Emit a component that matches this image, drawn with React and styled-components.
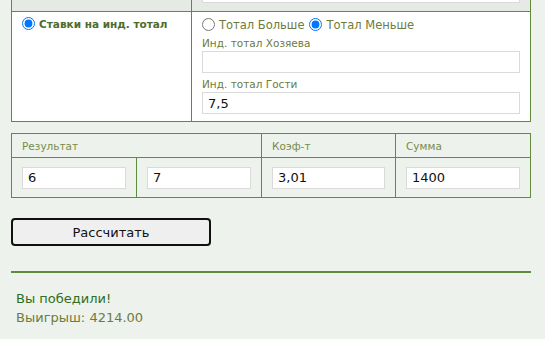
import React from 'react';
import styled, { createGlobalStyle } from 'styled-components';

const GlobalStyle = createGlobalStyle`
  html, body {
    margin: 0;
    padding: 0;
    background: #edf2ec;
    font-family: "DejaVu Sans", Verdana, sans-serif;
    overflow: hidden;
  }
`

const Page = styled.div`
  padding: 0 14px 0 11px;
  width: 520px;
`

const Table = styled.table`
  width: 520px;
  border-collapse: collapse;
  table-layout: fixed;
  margin-top: ${({ top }) => top}px;
  td, th {
    border: 1px solid #5f8b3f;
  }
`

const GreyRow = styled.tr`
  background: #e5eae4;
  td {
    height: 32px;
    padding: 0 10px 8px 10px;
    vertical-align: bottom;
  }
`

const WhiteRow = styled.tr`
  background: #ffffff;
  td {
    vertical-align: top;
    padding: 5px 10px 7px 10px;
  }
`

const Radio = styled.input.attrs({ type: 'radio' })`
  width: 13px;
  height: 13px;
  margin: 0 4px 0 0;
  vertical-align: -2px;
`

const BetLabel = styled.label`
  font-size: 10.5px;
  line-height: 14px;
  font-weight: bold;
  color: #4e6d2d;
  display: block;
`

const OptionLine = styled.div`
  line-height: 14px;
  height: 14px;
  white-space: nowrap;
`

const OptionLabel = styled.label`
  font-size: 11.5px;
  color: #6d7b3c;
  margin-right: 5px;
`

const FieldLabel = styled.div`
  font-size: 10.5px;
  line-height: 13px;
  color: #6d7b3c;
  margin-top: ${({ gap }) => gap}px;
  margin-bottom: 1px;
`

const TextInput = styled.input`
  box-sizing: border-box;
  display: block;
  width: 100%;
  height: 22px;
  border: 1px solid #dadada;
  background: #fff;
  font-family: "DejaVu Sans", Verdana, sans-serif;
  font-size: 13px;
  color: #111;
  padding: 0 5px;
  outline: none;
`

const HeadCell = styled.th`
  height: 23px;
  padding: 0 10px;
  text-align: left;
  font-weight: normal;
  font-size: 10.5px;
  color: #7a8a4a;
`

const BodyCell = styled.td`
  height: 39px;
  padding: 0 10px;
  vertical-align: middle;
`

const CalcButton = styled.button`
  display: block;
  margin-top: 20px;
  width: 200px;
  height: 28px;
  border: 2px solid #111;
  border-radius: 4px;
  background: #efefef;
  font-family: "DejaVu Sans", Verdana, sans-serif;
  font-size: 13px;
  color: #111;
  cursor: pointer;
`

const Divider = styled.hr`
  margin: 25px 0 0 0;
  border: none;
  height: 2px;
  width: 520px;
  background: #5f8b3f;
`

const Result = styled.div`
  padding: 16px 0 0 5px;
  font-size: 13px;
  line-height: 19px;
`

const Win = styled.div`
  color: #2e6e1c;
`

const Payout = styled.div`
  color: #6d7b3c;
`

const App = () => {
    return (
        <>
            <GlobalStyle />
            <Page>
                <Table top={-30}>
                    <colgroup>
                        <col style={{ width: 180 }} />
                        <col />
                    </colgroup>
                    <tbody>
                        <GreyRow>
                            <td></td>
                            <td><TextInput readOnly /></td>
                        </GreyRow>
                        <WhiteRow>
                            <td>
                                <BetLabel><Radio name="bet" defaultChecked />Ставки на инд. тотал</BetLabel>
                            </td>
                            <td>
                                <OptionLine>
                                    <OptionLabel><Radio name="total" />Тотал Больше</OptionLabel>
                                    <OptionLabel><Radio name="total" defaultChecked />Тотал Меньше</OptionLabel>
                                </OptionLine>
                                <FieldLabel gap={6}>Инд. тотал Хозяева</FieldLabel>
                                <TextInput defaultValue="" />
                                <FieldLabel gap={5}>Инд. тотал Гости</FieldLabel>
                                <TextInput defaultValue="7,5" />
                            </td>
                        </WhiteRow>
                    </tbody>
                </Table>

                <Table top={11}>
                    <colgroup>
                        <col style={{ width: 125 }} />
                        <col style={{ width: 125 }} />
                        <col style={{ width: 134 }} />
                        <col />
                    </colgroup>
                    <thead>
                        <tr>
                            <HeadCell colSpan={2}>Результат</HeadCell>
                            <HeadCell>Коэф-т</HeadCell>
                            <HeadCell>Сумма</HeadCell>
                        </tr>
                    </thead>
                    <tbody>
                        <tr>
                            <BodyCell><TextInput defaultValue="6" /></BodyCell>
                            <BodyCell><TextInput defaultValue="7" /></BodyCell>
                            <BodyCell><TextInput defaultValue="3,01" /></BodyCell>
                            <BodyCell><TextInput defaultValue="1400" /></BodyCell>
                        </tr>
                    </tbody>
                </Table>

                <CalcButton>Рассчитать</CalcButton>
                <Divider />
                <Result>
                    <Win>Вы победили!</Win>
                    <Payout>Выигрыш: 4214.00</Payout>
                </Result>
            </Page>
        </>
    );
}

export default App
